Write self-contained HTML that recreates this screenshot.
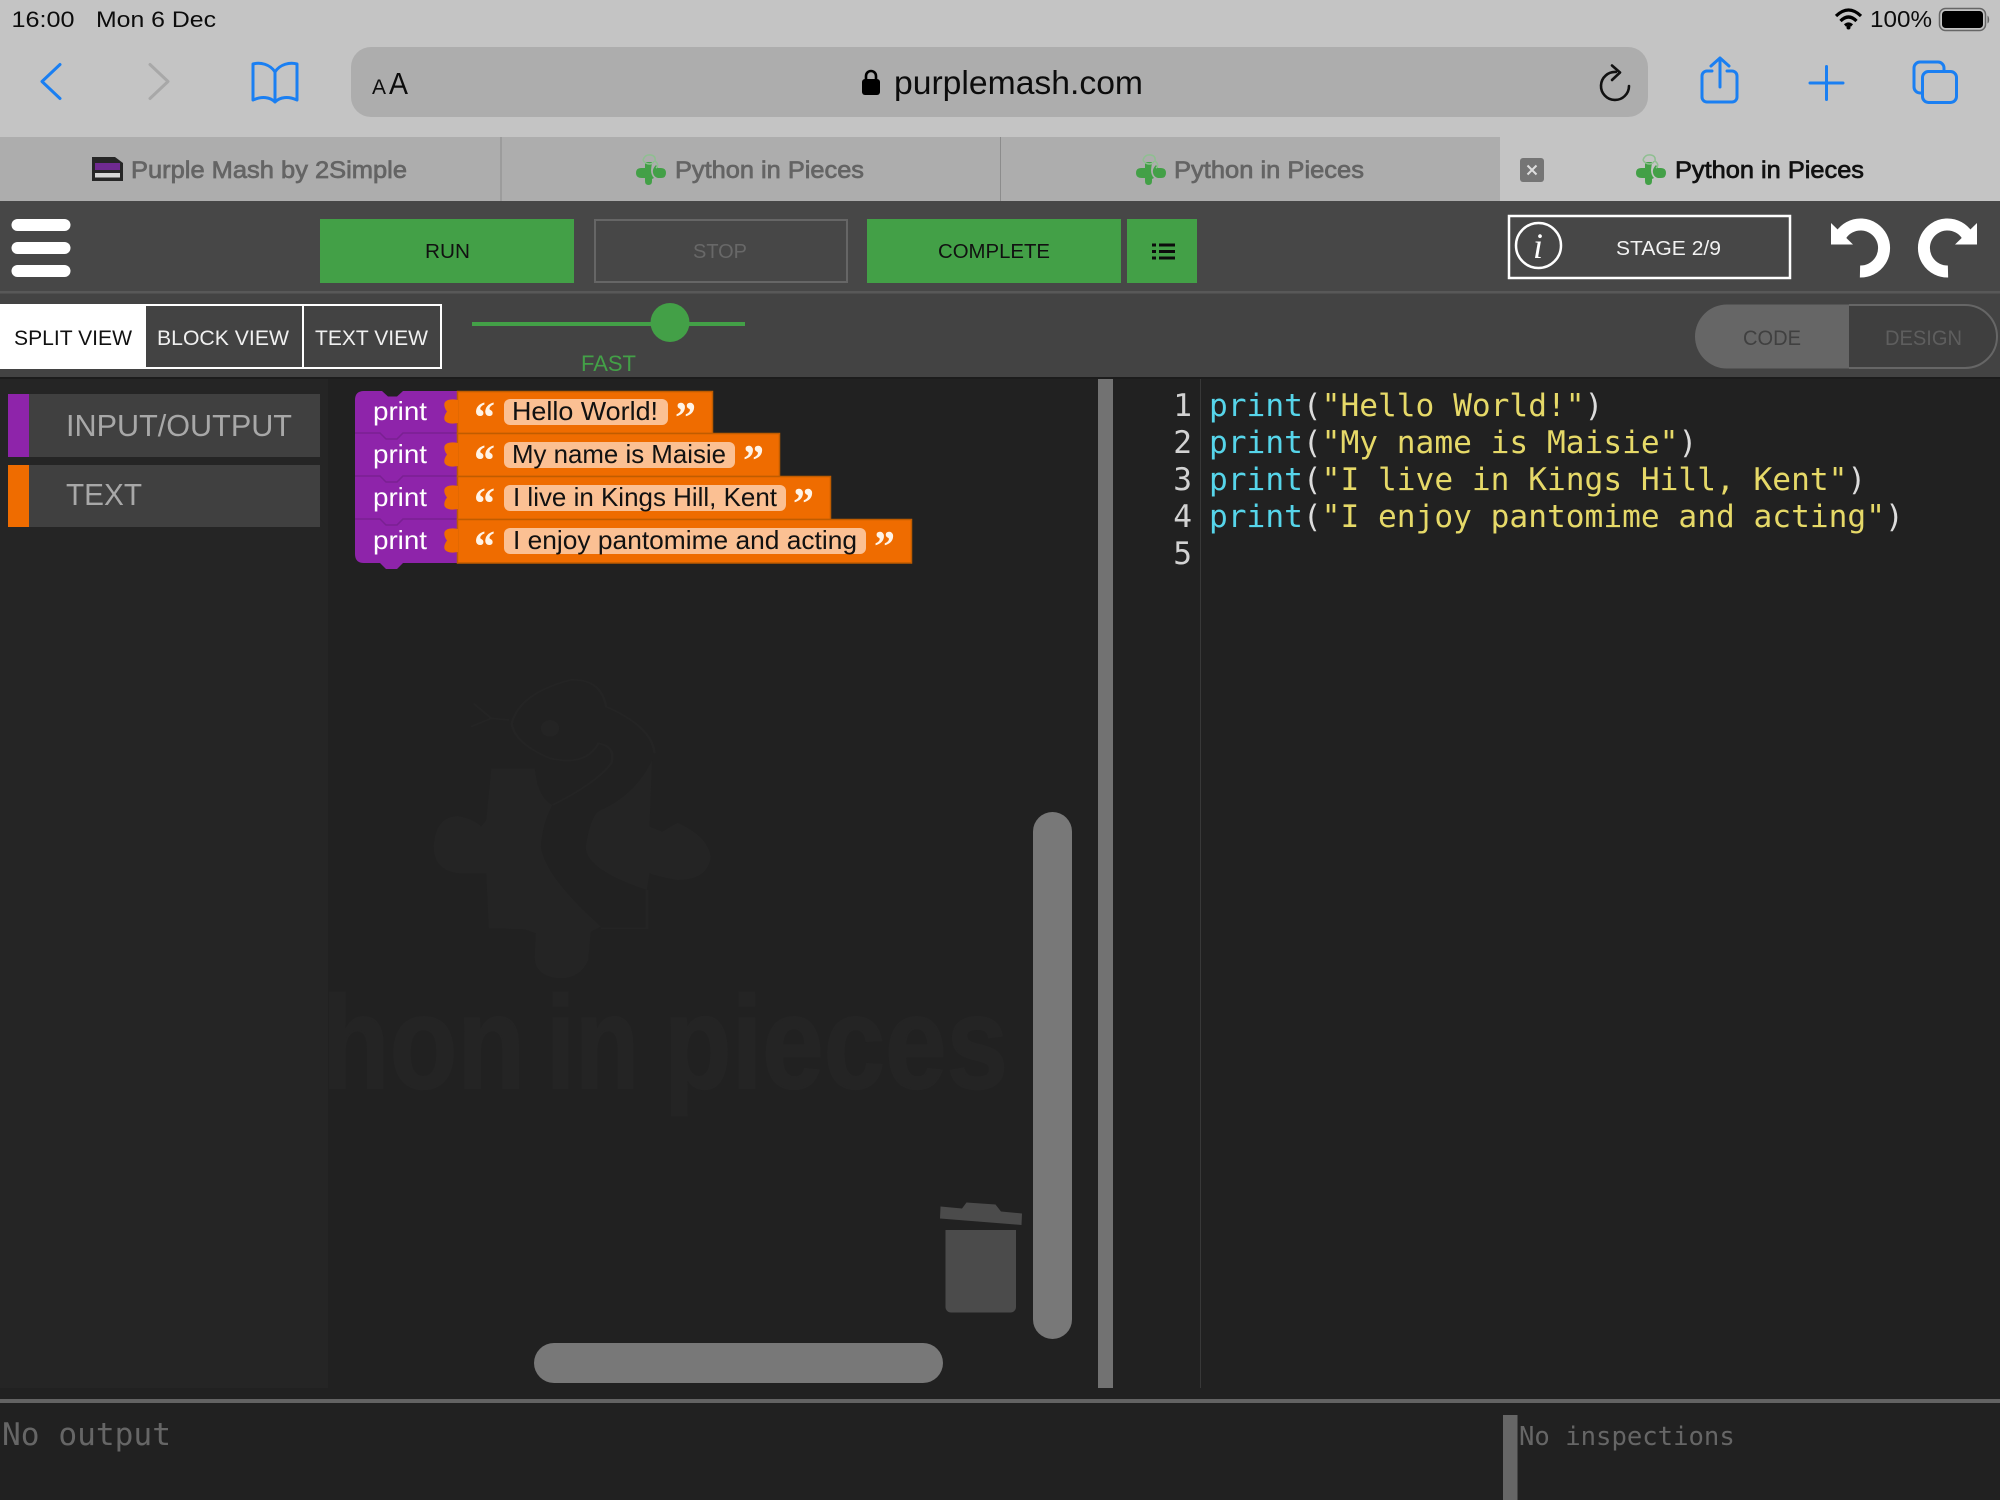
<!DOCTYPE html>
<html lang="en"><head><meta charset="utf-8"><title>Python in Pieces</title>
<style>
html,body{margin:0;padding:0;width:2000px;height:1500px;overflow:hidden;background:#212121}
svg{display:block}
text{font-family:"Liberation Sans",sans-serif}
.mono{font-family:"DejaVu Sans Mono","Liberation Mono",monospace;font-size:31.200px}
.ios{stroke:#1a7ff2;fill:none;stroke-width:3;stroke-linecap:round;stroke-linejoin:round}
.p{fill:#56d5ea}.s{fill:#e6d968}.w{fill:#dcdcdc}
</style></head><body>
<svg xmlns="http://www.w3.org/2000/svg" width="2000" height="1500" viewBox="0 0 2000 1500">
<defs>
<g id="fav">
<path d="M10 9H17L16 17Q16 22 19 25L17 26V28Q17 32 13.500 32Q10 32 10 28V25H7Q1 25 1 20Q1 15 6 15H10Z" fill="#43a047"/>
<path d="M21 12Q17 16 18 20Q19 24 23 25H26Q31 25 31 20Q31 15 26 15H23Z" fill="#43a047"/>
<path d="M8 7Q10 1 16 2Q21 3 20 8Q25 12 21 15M8 7Q10 11 15 11Q19 10 19 8" fill="none" stroke="#8fbf91" stroke-width="1.500"/>
</g>
</defs>

<!-- Safari chrome -->
<rect width="2000" height="137" fill="#c4c4c4"/>
<text x="11.500" y="27" font-size="22" textLength="63" lengthAdjust="spacingAndGlyphs" fill="#0c0c0c">16:00</text>
<text x="96" y="27" font-size="22" textLength="120" lengthAdjust="spacingAndGlyphs" fill="#0c0c0c">Mon 6 Dec</text>
<path d="M1836 16Q1848.500 4 1861 16M1840.500 21Q1848.500 13 1856.500 21M1845 25.500Q1848.500 22.500 1852 25.500" fill="none" stroke="#000" stroke-width="3.200"/>
<circle cx="1848.500" cy="27.500" r="2" fill="#000"/>
<text x="1870" y="27" font-size="23" textLength="62" lengthAdjust="spacingAndGlyphs" fill="#0c0c0c">100%</text>
<rect x="1939.500" y="8.500" width="46" height="22" rx="6" fill="none" stroke="#666" stroke-width="1.500"/>
<rect x="1942" y="11" width="41" height="17" rx="3.500" fill="#000"/>
<path d="M1987.500 15.500c2 1 2.500 7 0 8z" fill="#666"/>

<path class="ios" d="M60 64.500L42 81.500L60 98.500"/>
<path class="ios" style="stroke:#a8a8a8" d="M150 64.500L168 81.500L150 98.500"/>
<path class="ios" d="M275 72C270 64 260 62 253 64V100C262 96 270 97 275 102C280 97 288 96 297 100V64C290 62 280 64 275 72V102"/>
<rect x="351" y="47" width="1297" height="70" rx="20" fill="#adadad"/>
<text x="372" y="94" font-size="21" fill="#0c0c0c">A</text>
<text x="389" y="94" font-size="31" textLength="19" lengthAdjust="spacingAndGlyphs" fill="#0c0c0c">A</text>
<rect x="862" y="79" width="18" height="16" rx="3" fill="#000"/>
<path d="M866 80V76a5 5 0 0 1 10 0V80" fill="none" stroke="#000" stroke-width="2.600"/>
<text x="894" y="94" font-size="33.500" textLength="249" lengthAdjust="spacingAndGlyphs" fill="#0c0c0c">purplemash.com</text>
<path d="M1616 72A14 14 0 1 0 1629 86M1612 65.500L1620 72.500L1612 80" fill="none" stroke="#111" stroke-width="2.600" stroke-linecap="round" stroke-linejoin="round"/>
<path class="ios" d="M1712 71H1707a5 5 0 0 0-5 5V97a5 5 0 0 0 5 5H1732a5 5 0 0 0 5-5V76a5 5 0 0 0-5-5H1727M1720 87V58M1711 66L1720 58L1729 66"/>
<path class="ios" d="M1826.500 66.500V99.500M1810 83H1843"/>
<path class="ios" d="M1922 93H1920a6 6 0 0 1-6-6V68a6 6 0 0 1 6-6H1938a6 6 0 0 1 6 6V71"/>
<rect class="ios" x="1922.500" y="71.500" width="34" height="31" rx="6"/>

<!-- Tabs -->
<rect y="137" width="1500" height="64" fill="#adadad"/>
<rect x="1500" y="137" width="500" height="64" fill="#c4c4c4"/>
<rect x="500.500" y="137" width="1" height="64" fill="#8c8c8c"/>
<rect x="1000" y="137" width="1" height="64" fill="#8c8c8c"/>
<path d="M92 157H115L123 163V181H92Z" fill="#262626"/>
<rect x="95" y="163" width="25" height="7" fill="#6f2a90"/>
<rect x="95" y="173" width="25" height="4.500" fill="#d6d6d6"/>
<g fill="#646464" stroke="#646464" stroke-width=".700" font-size="24">
<text x="131" y="178" textLength="276" lengthAdjust="spacingAndGlyphs">Purple Mash by 2Simple</text>
<text x="675" y="178" textLength="189" lengthAdjust="spacingAndGlyphs">Python in Pieces</text>
<text x="1174" y="178" textLength="190" lengthAdjust="spacingAndGlyphs">Python in Pieces</text>
</g>
<text x="1675" y="178" font-size="24" textLength="189" lengthAdjust="spacingAndGlyphs" fill="#111" stroke="#111" stroke-width=".700">Python in Pieces</text>
<use href="#fav" x="635" y="153"/><use href="#fav" x="1135" y="153"/><use href="#fav" x="1635" y="153"/>
<rect x="1520" y="158" width="24" height="24" rx="3" fill="#757575"/>
<path d="M1527.500 165.500L1536.500 174.500M1536.500 165.500L1527.500 174.500" stroke="#ddd" stroke-width="2"/>

<!-- Toolbar -->
<rect y="201" width="2000" height="90" fill="#474747"/>
<rect y="291" width="2000" height="2.500" fill="#585858"/>
<rect y="293.500" width="2000" height="83.500" fill="#434343"/>
<rect x="11.500" y="219" width="59" height="12" rx="6" fill="#fff"/>
<rect x="11.500" y="242" width="59" height="12" rx="6" fill="#fff"/>
<rect x="11.500" y="265" width="59" height="12" rx="6" fill="#fff"/>
<rect x="320" y="219" width="254" height="64" fill="#43a047"/>
<text x="425" y="258" font-size="20" textLength="45" lengthAdjust="spacingAndGlyphs" fill="#111">RUN</text>
<rect x="595" y="220" width="252" height="62" fill="none" stroke="#666" stroke-width="2"/>
<text x="693" y="258" font-size="20" textLength="54" lengthAdjust="spacingAndGlyphs" fill="#686868">STOP</text>
<rect x="867" y="219" width="254" height="64" fill="#43a047"/>
<text x="938" y="258" font-size="20" textLength="112" lengthAdjust="spacingAndGlyphs" fill="#111">COMPLETE</text>
<rect x="1127" y="219" width="70" height="64" fill="#43a047"/>
<path d="M1159 245H1175M1159 251.500H1175M1159 258H1175M1152 245H1156M1152 251.500H1156M1152 258H1156" stroke="#0c0c0c" stroke-width="3"/>
<rect x="1509" y="216" width="281" height="62" fill="none" stroke="#fff" stroke-width="2.500"/>
<circle cx="1538.500" cy="245.500" r="22.500" fill="none" stroke="#fff" stroke-width="2.500"/>
<text x="1533" y="258" font-size="36" fill="#fff" style="font-family:'Liberation Serif',serif;font-style:italic">i</text>
<text x="1616" y="255" font-size="20.500" textLength="105" lengthAdjust="spacingAndGlyphs" fill="#f2f2f2">STAGE 2/9</text>
<path d="M1860 271.500A23.500 23.500 0 1 0 1841 235" fill="none" stroke="#fff" stroke-width="12"/>
<path d="M1831 223V244.500H1853z" fill="#fff"/>
<path d="M1948 271.500A23.500 23.500 0 1 1 1967 235" fill="none" stroke="#fff" stroke-width="12"/>
<path d="M1977 223V244.500H1955z" fill="#fff"/>

<!-- View tabs -->
<rect x="0" y="305" width="441" height="63" fill="#434343" stroke="#fff" stroke-width="2"/>
<rect x="0" y="304" width="146" height="65" fill="#fff"/>
<rect x="302" y="305" width="2" height="63" fill="#fff"/>
<text x="14" y="345" font-size="21" textLength="118" lengthAdjust="spacingAndGlyphs" fill="#111">SPLIT VIEW</text>
<text x="157" y="345" font-size="21" textLength="132" lengthAdjust="spacingAndGlyphs" fill="#f0f0f0">BLOCK VIEW</text>
<text x="315" y="345" font-size="21" textLength="113" lengthAdjust="spacingAndGlyphs" fill="#f0f0f0">TEXT VIEW</text>
<rect x="472" y="322" width="273" height="4" fill="#43a047"/>
<circle cx="670" cy="322.500" r="19.500" fill="#43a047"/>
<text x="581" y="371" font-size="22" textLength="55" lengthAdjust="spacingAndGlyphs" fill="#43a047">FAST</text>
<path d="M1849 304.500H1727a32 32 0 0 0 0 64H1849z" fill="#666"/>
<path d="M1849 305H1965a32 31.500 0 0 1 0 63H1849" fill="#3f3f3f" stroke="#666" stroke-width="2"/>
<text x="1743" y="345" font-size="21" textLength="58" lengthAdjust="spacingAndGlyphs" fill="#404040">CODE</text>
<text x="1885" y="345" font-size="21" textLength="77" lengthAdjust="spacingAndGlyphs" fill="#5e5e5e">DESIGN</text>

<!-- Main panels -->
<rect y="377" width="2000" height="1123" fill="#212121"/>
<rect y="377" width="2000" height="2" fill="#1c1c1c"/>
<rect y="379" width="328" height="1009" fill="#252525"/>
<rect x="8" y="394" width="312" height="63" fill="#404040"/>
<rect x="8" y="394" width="21" height="63" fill="#8e24aa"/>
<text x="66" y="436" font-size="31" textLength="226" lengthAdjust="spacingAndGlyphs" fill="#a8a8a8">INPUT/OUTPUT</text>
<rect x="8" y="465" width="312" height="62" fill="#404040"/>
<rect x="8" y="465" width="21" height="62" fill="#ef6c00"/>
<text x="66" y="505" font-size="31" textLength="76" lengthAdjust="spacingAndGlyphs" fill="#a8a8a8">TEXT</text>

<!-- Watermark -->
<g transform="translate(300 650) scale(.5102 .3333)">
<path fill="#242424" d="M375 355L460 355L465 400Q475 450 495 465Q475 520 472 590Q480 680 590 830L570 845L565 930Q550 985 510 985Q460 980 460 920L462 850L440 838L370 835L365 670Q340 670 310 670Q262 660 262 590Q265 500 310 498Q345 510 355 530L365 510Z"/>
<path fill="#242424" d="M690 330L685 530L710 545L740 518Q800 560 805 620Q800 690 740 690Q700 680 685 670L680 720Q560 660 560 590Q570 490 590 480Q660 430 690 330Z"/>
<path fill="none" stroke="#242424" stroke-width="5" d="M415 220Q430 130 530 90Q590 85 600 170Q690 230 695 310M415 220Q420 280 490 325Q560 350 585 280Q620 290 610 340Q580 400 495 465M410 210L375 205L340 160M375 205L335 230M680 720V835H590"/>
<ellipse cx="490" cy="235" rx="18" ry="25" fill="#242424"/>
</g>
<g fill="#242424" stroke="#242424" stroke-width="2" font-weight="bold" font-size="132">
<text x="322" y="1088" textLength="203" lengthAdjust="spacingAndGlyphs">hon</text>
<text x="546" y="1088" textLength="93" lengthAdjust="spacingAndGlyphs">in</text>
<text x="664" y="1088" textLength="344" lengthAdjust="spacingAndGlyphs">pieces</text>
</g>
<rect y="950" x="300" width="28" height="160" fill="#252525"/>

<!-- Blocks -->
<path d="M364 391H382L388 396.500H397L403 391H457V563H403L397 569H386L380 563H364Q355 563 355 554V400Q355 391 364 391Z" fill="#8e24aa"/>
<path d="M355 433H380L386 439H397L403 433H457M355 476H380L386 482H397L403 476H457M355 519H380L386 525H397L403 519H457" fill="none" stroke="#7a2092" stroke-width="1.500"/>
<g fill="#ef6c00" stroke="#c05c00" stroke-width="1.500">
<rect x="457.500" y="391.500" width="255" height="42"/>
<rect x="457.500" y="433.500" width="322" height="43"/>
<rect x="457.500" y="476.500" width="373" height="43"/>
<rect x="457.500" y="519.500" width="454" height="43.500"/>
</g>
<g fill="#ef6c00">
<path d="M458 400Q447 398 444.500 403Q443.500 407 447 411.500Q443.500 416 444.500 420Q447 425 458 423Z"/>
<path d="M458 443Q447 441 444.500 446Q443.500 450 447 454.500Q443.500 459 444.500 463Q447 468 458 466Z"/>
<path d="M458 486Q447 484 444.500 489Q443.500 493 447 497.500Q443.500 502 444.500 506Q447 511 458 509Z"/>
<path d="M458 529Q447 527 444.500 532Q443.500 536 447 540.500Q443.500 545 444.500 549Q447 554 458 552Z"/>
</g>
<g fill="#fbc093">
<rect x="504" y="399" width="164" height="26" rx="6"/>
<rect x="504" y="442" width="231" height="26" rx="6"/>
<rect x="504" y="485" width="282" height="26" rx="6"/>
<rect x="504" y="528" width="362" height="26" rx="6"/>
</g>
<g fill="#fff" font-size="26">
<text x="373" y="420" textLength="54" lengthAdjust="spacingAndGlyphs">print</text>
<text x="373" y="463" textLength="54" lengthAdjust="spacingAndGlyphs">print</text>
<text x="373" y="506" textLength="54" lengthAdjust="spacingAndGlyphs">print</text>
<text x="373" y="549" textLength="54" lengthAdjust="spacingAndGlyphs">print</text>
</g>
<g fill="#111" font-size="26">
<text x="512" y="420" textLength="146" lengthAdjust="spacingAndGlyphs">Hello World!</text>
<text x="512" y="463" textLength="214" lengthAdjust="spacingAndGlyphs">My name is Maisie</text>
<text x="513" y="506" textLength="264" lengthAdjust="spacingAndGlyphs">I live in Kings Hill, Kent</text>
<text x="513" y="549" textLength="344" lengthAdjust="spacingAndGlyphs">I enjoy pantomime and acting</text>
</g>
<g fill="#fff3e6" font-size="44" font-weight="bold">
<text style="font-family:'Liberation Serif',serif" x="474" y="432" textLength="21" lengthAdjust="spacingAndGlyphs">“</text>
<text style="font-family:'Liberation Serif',serif" x="474" y="475" textLength="21" lengthAdjust="spacingAndGlyphs">“</text>
<text style="font-family:'Liberation Serif',serif" x="474" y="518" textLength="21" lengthAdjust="spacingAndGlyphs">“</text>
<text style="font-family:'Liberation Serif',serif" x="474" y="561" textLength="21" lengthAdjust="spacingAndGlyphs">“</text>
<text style="font-family:'Liberation Serif',serif" x="675" y="432" textLength="21" lengthAdjust="spacingAndGlyphs">”</text>
<text style="font-family:'Liberation Serif',serif" x="743" y="475" textLength="21" lengthAdjust="spacingAndGlyphs">”</text>
<text style="font-family:'Liberation Serif',serif" x="793" y="518" textLength="21" lengthAdjust="spacingAndGlyphs">”</text>
<text style="font-family:'Liberation Serif',serif" x="874" y="561" textLength="21" lengthAdjust="spacingAndGlyphs">”</text>
</g>

<!-- Scrollbars, trash, dividers -->
<rect x="1033" y="812" width="39" height="527" rx="19.500" fill="#787878"/>
<rect x="534" y="1343" width="409" height="40" rx="20" fill="#787878"/>
<path d="M940.500 1206.500L962 1208.500L966.500 1202.500L995.500 1204.500L1001 1211.500L1022 1213.500L1021.500 1225L940 1218.500Z" fill="#4b4b4b"/>
<path d="M945.500 1230H1016V1307a5.500 5.500 0 0 1-5.500 5.500H951a5.500 5.500 0 0 1-5.500-5.500Z" fill="#4b4b4b"/>
<rect x="1098" y="379" width="15" height="1009" fill="#727272"/>
<rect x="1200" y="379" width="1" height="1009" fill="#383838"/>

<!-- Code -->
<g fill="#d2d2d2" text-anchor="end">
<text class="mono" x="1192" y="416">1</text>
<text class="mono" x="1192" y="453">2</text>
<text class="mono" x="1192" y="490">3</text>
<text class="mono" x="1192" y="527">4</text>
<text class="mono" x="1192" y="564">5</text>
</g>
<text class="mono" x="1209" y="416" xml:space="preserve"><tspan class="p">print</tspan><tspan class="w">(</tspan><tspan class="s">"Hello World!"</tspan><tspan class="w">)</tspan></text>
<text class="mono" x="1209" y="453" xml:space="preserve"><tspan class="p">print</tspan><tspan class="w">(</tspan><tspan class="s">"My name is Maisie"</tspan><tspan class="w">)</tspan></text>
<text class="mono" x="1209" y="490" xml:space="preserve"><tspan class="p">print</tspan><tspan class="w">(</tspan><tspan class="s">"I live in Kings Hill, Kent"</tspan><tspan class="w">)</tspan></text>
<text class="mono" x="1209" y="527" xml:space="preserve"><tspan class="p">print</tspan><tspan class="w">(</tspan><tspan class="s">"I enjoy pantomime and acting"</tspan><tspan class="w">)</tspan></text>

<!-- Output -->
<rect y="1399" width="2000" height="4" fill="#636363"/>
<text class="mono" x="2" y="1445" fill="#666">No output</text>
<rect x="1503" y="1415" width="14.500" height="85" fill="#666"/>
<text x="1519" y="1445" fill="#666" style="font-family:'DejaVu Sans Mono',monospace;font-size:25.600px">No inspections</text>
</svg>
</body></html>
